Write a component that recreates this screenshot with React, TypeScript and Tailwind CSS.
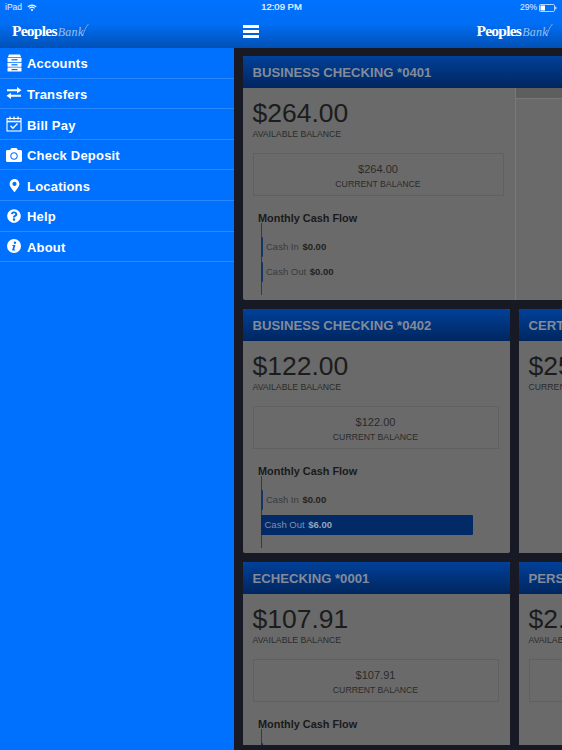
import React from "react";
import { FaCamera, FaMapMarkerAlt, FaQuestionCircle } from "react-icons/fa";

const sans = "font-['Liberation_Sans',Arial,sans-serif]";

function Logo() {
  return (
    <div className="flex items-baseline font-['Liberation_Serif',serif] text-white leading-none">
      <span className="font-bold text-[15.5px] tracking-[-0.75px]">Peoples</span>
      <span className="italic text-[12px] tracking-[0.3px] text-white/60 ml-[1px]">Bank</span>
      <svg width="7" height="14" viewBox="0 0 7 14" fill="none" stroke="white" strokeOpacity="0.7" strokeWidth="0.6" className="-ml-[2px] self-end mb-[2px]">
        <path d="M0.5 13C2 9 3.5 4 6.5 1" />
      </svg>
    </div>
  );
}

function AccountsIcon() {
  return (
    <svg width="15" height="18" viewBox="0 0 15 18" fill="white">
      <path d="M2 0.5h11l1 2.5H1z" />
      <rect x="0.5" y="3.8" width="14" height="4.2" rx="0.5" />
      <rect x="0.5" y="8.8" width="14" height="4" rx="0.5" />
      <rect x="0.5" y="13.6" width="14" height="4" rx="0.5" />
      <rect x="4.5" y="5.2" width="6" height="1.2" fill="#0070ff" />
      <rect x="4.5" y="10.2" width="6" height="1.2" fill="#0070ff" />
      <rect x="4.5" y="15" width="6" height="1.2" fill="#0070ff" />
    </svg>
  );
}

function TransfersIcon() {
  return (
    <svg width="16" height="12" viewBox="0 0 16 12" fill="white">
      <path d="M1 2.2h10V0L15.5 3.2 11 6.2V4.2H1z" />
      <path d="M15 9.8H5V12L0.5 8.8 5 5.8v2h10z" />
    </svg>
  );
}

function CalendarIcon() {
  return (
    <svg width="16" height="16" viewBox="0 0 16 16" fill="none" stroke="white">
      <rect x="1" y="2.5" width="14" height="12.5" strokeWidth="1.1" />
      <path d="M1 5.5h14" strokeWidth="1.6" />
      <path d="M4 0.5v3M8 0.5v3M12 0.5v3" strokeWidth="1.3" />
      <path d="M4.5 9.8l2.4 2.4 4.6-4.6" strokeWidth="1.4" />
    </svg>
  );
}

function AboutIcon() {
  return (
    <svg width="14" height="14" viewBox="0 0 14 14">
      <circle cx="7" cy="7" r="7" fill="white" />
      <circle cx="7.9" cy="3.7" r="1.2" fill="#0070ff" />
      <path d="M5.5 6h3l-1.3 4.6h1L8 11.6H5l1.3-4.7h-1z" fill="#0070ff" />
    </svg>
  );
}

const items: [string, React.ReactNode][] = [
  ["Accounts", <AccountsIcon />],
  ["Transfers", <TransfersIcon />],
  ["Bill Pay", <CalendarIcon />],
  ["Check Deposit", <FaCamera size={16} color="white" />],
  ["Locations", <FaMapMarkerAlt size={13} color="white" />],
  ["Help", <FaQuestionCircle size={14} color="white" />],
  ["About", <AboutIcon />],
];

function Bar({ label, value, wide }: { label: string; value: string; wide?: boolean }) {
  return (
    <div
      className={`h-[20px] flex items-center rounded-[1px] text-[9.5px] pt-[1px] ${
        wide ? "w-[212px] bg-[#012a66] text-[#7f90ab]" : "w-[2px] bg-[#173564] text-[#3a3a3a]"
      }`}
    >
      <span className={`whitespace-nowrap ${wide ? "ml-[3.5px]" : "ml-[5px]"}`}>
        {label} <b className={`ml-[1px] ${wide ? "text-[#97a5bd]" : "text-[#222222]"}`}>{value}</b>
      </span>
    </div>
  );
}

function CardHeader({ title }: { title: string }) {
  return (
    <div className="h-[32px] shrink-0 flex items-center pl-[9.5px] pt-[1px] bg-gradient-to-b from-[#00419a] to-[#00265f] rounded-t-[2px] text-[13.15px] font-bold text-[#838b99] whitespace-nowrap overflow-hidden">
      {title}
    </div>
  );
}

function CardBody({ amount, out, tall }: { amount: string; out: string; tall?: boolean }) {
  return (
    <div className="pl-[9.5px] pt-[10px] text-[#1c1c1c]">
      <div className="text-[26.5px] leading-[31px]">{amount}</div>
      <div className="text-[8.7px] leading-[12px] text-[#2b2b2b] -mt-[1px]">AVAILABLE BALANCE</div>
      <div className={`mt-[13px] h-[43px] border border-[#606060] flex flex-col items-center justify-center pt-[5px] ${tall ? "w-[251px]" : "w-[246px]"}`}>
        <div className="text-[11px] leading-[15px] text-[#2b2b2b]">{amount}</div>
        <div className="text-[8.7px] leading-[15px] text-[#2b2b2b]">CURRENT BALANCE</div>
      </div>
      <div className="mt-[16px] ml-[5.5px] text-[10.9px] leading-[13px] font-bold text-[#1a1a1a]">Monthly Cash Flow</div>
      <div className="ml-[8.5px] -mt-[2px] w-[1px] h-[72px] bg-[#2b3a55] flex flex-col gap-[5px] pt-[14px]">
        <Bar label="Cash In" value="$0.00" />
        <Bar label="Cash Out" value={out} wide={out !== "$0.00"} />
      </div>
    </div>
  );
}

function Cut({ title, amount, label }: { title: string; amount: string; label: string }) {
  return (
    <div className="flex-1 min-w-0 bg-[#6a6a6a] rounded-t-[2px] overflow-hidden">
      <CardHeader title={title} />
      <div className="pl-[9.5px] pt-[10px] text-[#1c1c1c] whitespace-nowrap">
        <div className="text-[26.5px] leading-[31px]">{amount}</div>
        <div className="text-[8.7px] leading-[12px] text-[#2b2b2b] -mt-[1px]">{label}</div>
        {label === "AVAILABLE BALANCE" && <div className="mt-[13px] h-[43px] w-[200px] border border-[#606060]" />}
      </div>
    </div>
  );
}

export default function App() {
  return (
    <div className={`${sans} w-[562px] h-[750px] overflow-hidden flex flex-col bg-[#171a25]`}>
      <header className="h-[48px] shrink-0 bg-gradient-to-b from-[#0072ff] via-[#006ef5] to-[#0050b4] text-white relative">
        <div className="h-[15px] flex items-center justify-between px-[5px] text-[8.5px] text-white/90">
          <div className="flex items-center gap-[5px]">
            <span>iPad</span>
            <svg width="10" height="8" viewBox="0 0 10 8" fill="none" stroke="white" strokeWidth="1.1">
              <path d="M0.8 2.8a6 6 0 0 1 8.4 0M2.4 4.4a3.8 3.8 0 0 1 5.2 0" />
              <path d="M3.6 5.8L5 7.3l1.4-1.5a2 2 0 0 0-2.8 0z" fill="white" stroke="none" />
            </svg>
          </div>
          <span className="absolute left-[1px] right-0 text-center text-[9.5px] [-webkit-text-stroke:0.2px_white]">12:09 PM</span>
          <div className="flex items-center gap-[2px]">
            <span>29%</span>
            <svg width="18" height="8" viewBox="0 0 18 8">
              <rect x="0.5" y="0.5" width="15" height="7" rx="1.2" fill="none" stroke="white" strokeWidth="0.7" />
              <rect x="1.5" y="1.5" width="4.5" height="5" fill="white" />
              <rect x="16.3" y="2.7" width="1" height="2.6" fill="white" />
            </svg>
          </div>
        </div>
        <div className="h-[32px] flex items-center">
          <div className="w-[234px] pl-[12px] shrink-0"><Logo /></div>
          <div className="ml-[9px] flex flex-col gap-[2px]">
            <div className="w-[16px] h-[3px] bg-white" />
            <div className="w-[16px] h-[3px] bg-white" />
            <div className="w-[16px] h-[3px] bg-white" />
          </div>
          <div className="ml-auto pr-[9px]"><Logo /></div>
        </div>
      </header>
      <div className="flex-1 flex min-h-0">
        <nav className="w-[234px] shrink-0 bg-[#0070ff]">
          {items.map(([label, icon]) => (
            <div key={label} className="h-[30.6px] flex items-center border-b border-[#2b88ff] text-white">
              <div className="w-[27px] shrink-0 flex justify-center pl-[1px]">{icon}</div>
              <span className="text-[13px] font-bold tracking-[0.2px] pt-[2.8px]">{label}</span>
            </div>
          ))}
        </nav>
        <main className="flex-1 min-w-0 pl-[9px] pt-[8px] flex flex-col gap-[9px] overflow-hidden">
          <section className="h-[244px] shrink-0 w-[340px] bg-[#6a6a6a] rounded-[2px] overflow-hidden flex">
            <div className="w-[272px] shrink-0">
              <div className="w-[340px]"><CardHeader title="BUSINESS CHECKING *0401" /></div>
              <CardBody amount="$264.00" out="$0.00" tall />
            </div>
            <div className="flex-1 mt-[32px] border-l border-[#7a7a7a]">
              <div className="h-[11px] bg-[#5e5e5e] border-b border-[#777777]" />
            </div>
          </section>
          <div className="h-[244px] shrink-0 flex gap-[9px] w-[340px]">
            <section className="w-[267px] shrink-0 bg-[#6a6a6a] rounded-[2px] overflow-hidden">
              <CardHeader title="BUSINESS CHECKING *0402" />
              <CardBody amount="$122.00" out="$6.00" />
            </section>
            <Cut title="CERTIFICATE" amount="$25,000.00" label="CURRENT BALANCE" />
          </div>
          <div className="h-[183px] shrink-0 flex gap-[9px] w-[340px]">
            <section className="w-[267px] shrink-0 bg-[#6a6a6a] rounded-t-[2px] overflow-hidden">
              <CardHeader title="ECHECKING *0001" />
              <CardBody amount="$107.91" out="$0.00" />
            </section>
            <Cut title="PERSONAL" amount="$2.00" label="AVAILABLE BALANCE" />
          </div>
        </main>
      </div>
    </div>
  );
}
